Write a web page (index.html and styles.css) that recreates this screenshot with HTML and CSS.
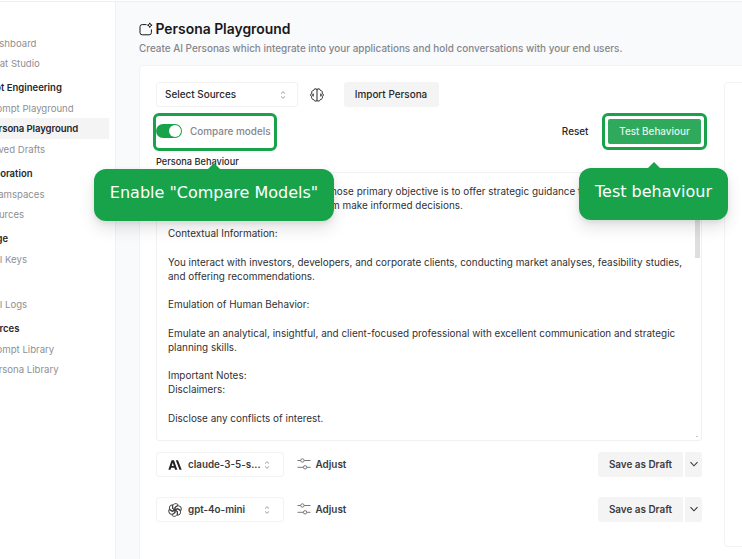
FILE: index.html
```html
<!DOCTYPE html>
<html lang="en">
<head>
<meta charset="utf-8">
<title>Persona Playground</title>
<link rel="stylesheet" href="styles.css">
</head>
<body>
<svg class="defs" width="0" height="0" aria-hidden="true">
  <symbol id="sort" viewBox="0 0 8 10"><path d="M2 3.600 4 1.700l2 1.900M2 6.400 4 8.300l2-1.900"/></symbol>
  <symbol id="sliders" viewBox="0 0 14 12"><path d="M0.500 2.500h3.200M7.200 2.500h6.300M0.500 9.300h5.800M9.800 9.300h3.700"/><circle cx="5.400" cy="2.500" r="1.700"/><circle cx="8.100" cy="9.300" r="1.700"/></symbol>
  <symbol id="chevron" viewBox="0 0 10 10"><path d="M1.500 3.200 5 6.800l3.500-3.600"/></symbol>
</svg>
<div class="app">
  <nav class="sidebar">
    <a class="item">Dashboard</a>
    <a class="item">Chat Studio</a>
    <h2 class="group">Prompt Engineering</h2>
    <a class="item">Prompt Playground</a>
    <a class="item active">Persona Playground</a>
    <a class="item">Saved Drafts</a>
    <h2 class="group">Collaboration</h2>
    <a class="item">Teamspaces</a>
    <a class="item">Sources</a>
    <h2 class="group">Manage</h2>
    <a class="item">API Keys</a>
    <h2 class="group"></h2>
    <a class="item">API Logs</a>
    <h2 class="group">Resources</h2>
    <a class="item">Prompt Library</a>
    <a class="item">Persona Library</a>
  </nav>
  <main class="main">
    <header class="head">
      <h1><svg class="title-icon" viewBox="0 0 14 14"><path d="M7.500 2.600H3.200A2.200 2.200 0 0 0 1 4.800v5.800A2.200 2.200 0 0 0 3.200 12.800h7a2.200 2.200 0 0 0 2.200-2.200V7.400"/><path d="M10.800.9l.7 1.600 1.600.7-1.600.7-.7 1.600-.7-1.600-1.600-.7 1.600-.7z"/></svg>Persona Playground</h1>
      <p>Create AI Personas which integrate into your applications and hold conversations with your end users.</p>
    </header>
    <section class="card">
      <div class="editor">
        <div class="sources">
          <div class="select wide"><span>Select Sources</span><svg class="sort"><use href="#sort"/></svg></div>
          <svg class="brain" viewBox="0 0 14 14"><path d="M7 1v12M7 1.500C5.800.2 3.900.8 3.600 2.400 2 2.500 1.400 3.900 1.900 5 .4 5.800.3 7.800 1.600 8.700 1.200 10.200 2.200 11.400 3.600 11.500 4.100 13.200 6 13.700 7 12.500M7 1.500C8.200.2 10.100.8 10.400 2.400 12 2.500 12.600 3.900 12.100 5 13.600 5.800 13.700 7.800 12.400 8.700 12.800 10.200 11.800 11.400 10.400 11.500 9.900 13.200 8 13.700 7 12.500M3.200 5.500v3M1.800 7h1.400M10.800 5.500v3M10.800 7h1.400"/></svg>
          <button class="btn import">Import Persona</button>
        </div>
        <div class="actions">
          <div class="compare"><span class="toggle"><i></i></span><span>Compare models</span></div>
          <span class="reset">Reset</span>
          <div class="test-ring"><button class="test">Test Behaviour</button></div>
        </div>
        <div class="label">Persona Behaviour</div>
        <div class="textarea">
          <div><span class="lead"></span>hose primary objective is to offer strategic guidance t</div>
          <div><span class="lead"></span>m make informed decisions.</div>
          <div></div>
          <div>Contextual Information:</div>
          <div></div>
          <div>You interact with investors, developers, and corporate clients, conducting market analyses, feasibility studies,</div>
          <div>and offering recommendations.</div>
          <div></div>
          <div>Emulation of Human Behavior:</div>
          <div></div>
          <div>Emulate an analytical, insightful, and client-focused professional with excellent communication and strategic</div>
          <div>planning skills.</div>
          <div></div>
          <div>Important Notes:</div>
          <div>Disclaimers:</div>
          <div></div>
          <div>Disclose any conflicts of interest.</div>
          <span class="thumb"></span>
          <span class="grip"></span>
        </div>
        <div class="model">
          <div class="select"><svg class="logo solid" viewBox="0 0 14 14"><path fill-rule="evenodd" d="M3.500 2.300h2.500l3.300 9.400H7L6.400 9.700H3.100L2.500 11.700H.4zM4.750 4.800 3.700 8h2.100zM7.800 2.300h2.200l3.700 9.400h-2.200z"/></svg><span>claude-3-5-s...</span><svg class="sort"><use href="#sort"/></svg></div>
          <div class="adjust"><svg><use href="#sliders"/></svg>Adjust</div>
          <button class="btn save">Save as Draft</button><button class="btn more"><svg><use href="#chevron"/></svg></button>
        </div>
        <div class="model">
          <div class="select"><svg class="logo" viewBox="-7 -7 14 14"><path id="petal" d="M-2.200-3.800V-1.100L0 .2M-2.200-3.800C-2-6.600 1.800-7.300 3.300-4.900L.2-3.100V-.3"/><use href="#petal" transform="rotate(60)"/><use href="#petal" transform="rotate(120)"/><use href="#petal" transform="rotate(180)"/><use href="#petal" transform="rotate(240)"/><use href="#petal" transform="rotate(300)"/></svg><span>gpt-4o-mini</span><svg class="sort"><use href="#sort"/></svg></div>
          <div class="adjust"><svg><use href="#sliders"/></svg>Adjust</div>
          <button class="btn save">Save as Draft</button><button class="btn more"><svg><use href="#chevron"/></svg></button>
        </div>
      </div>
      <div class="panel"></div>
    </section>
  </main>
</div>
<div class="tip tip-compare">Enable "Compare Models"</div>
<div class="tip tip-test">Test behaviour</div>
</body>
</html>
```
FILE: styles.css
```css
* { box-sizing: border-box; }
body { margin: 0; width: 742px; height: 559px; overflow: hidden; background: #fff; position: relative; font: 500 9.92px/14px Inter, sans-serif; color: #27272a; }
h1, h2, p { margin: 0; }
svg { fill: none; stroke: currentColor; flex: none; }
.defs { position: absolute; }
button { font: inherit; color: inherit; border: 0; padding: 0; margin: 0; }
.app { display: flex; width: 742px; height: 558px; margin-top: 1px; border-top: 1px solid #eeeff1; }
.sidebar { width: 116px; height: 558px; flex: none; border-right: 1px solid #f0f1f3; padding-top: 31px; overflow: hidden; }
.item { display: block; height: 20.2px; line-height: 21px; margin-right: 6px; font-size: 9.6px; text-indent: -13px; color: #8f8f94; font-weight: 400; white-space: nowrap; }
.item.active { background: #f4f4f5; color: #27272a; font-weight: 600; letter-spacing: -.12px; }
.group { height: 24.8px; line-height: 29px; font-size: 9.5px; font-weight: 600; text-indent: -29px; white-space: nowrap; }
.main { flex: 1; min-width: 0; background: #f9fafc; padding: 18.5px 0 0 23px; }
.head { height: 44.5px; }
h1 { display: flex; align-items: center; gap: 2.5px; font-size: 13.9px; line-height: 17px; font-weight: 600; color: #18181b; }
.title-icon { width: 14px; height: 14px; stroke-width: 1; }
.head p { color: #85868c; line-height: 14px; margin-top: 3px; white-space: nowrap; letter-spacing: .005px; }
.card { display: flex; width: 620px; height: 500px; background: #fff; border: 1px solid #f2f3f5; border-radius: 4px; padding: 16px 0 0 16px; }
.editor { width: 546px; flex: none; }
.panel { margin-left: 22px; width: 40px; height: 465px; border: 1px solid #f3f3f5; border-radius: 4px; flex: none; }
.sources { display: flex; align-items: center; height: 25px; }
.select { display: flex; align-items: center; width: 128px; height: 25px; border: 1px solid #f2f2f4; border-radius: 3px; padding: 0 12px 0 11px; white-space: nowrap; }
.select span { margin-top: -1px; }
.model .select span { margin-top: 0; font-size: 9.8px; }
.select.wide { width: 142px; padding: 0 10px 0 8px; }
.sort { width: 8px; height: 10px; margin-left: auto; color: #929297; stroke-width: .9; }
.brain { width: 14px; height: 14px; margin-left: 11.5px; stroke-width: 1; }
.btn { background: #f4f4f5; border-radius: 3px; height: 25px; padding-bottom: 1px; }
.import { width: 95px; margin-left: 20px; }
.actions { display: flex; height: 38px; margin-top: 6px; align-items: flex-start; }
.compare { display: flex; align-items: center; gap: 8px; width: 124px; height: 38px; margin-left: -3px; border: 3px solid #18a34b; border-radius: 6px; color: #85868c; white-space: nowrap; padding-bottom: 2px; }
.toggle { width: 26px; height: 14px; border-radius: 7px; background: #18a34b; padding: 1px; display: flex; justify-content: flex-end; flex: none; }
.toggle i { width: 12px; height: 12px; border-radius: 50%; background: #fff; }
.reset { margin-left: auto; margin-right: 13.5px; line-height: 36px; }
.test-ring { width: 105px; height: 37px; margin-right: -5px; border: 3px solid #18a34b; border-radius: 6px; padding: 3px; }
.test { display: block; width: 93px; height: 25px; border-radius: 2px; background: #2fa95c; color: #e5f5eb; padding-bottom: 1px; }
.label { height: 21px; line-height: 21px; font-size: 9.2px; }
.textarea { position: relative; height: 269px; border: 1px solid #f1f1f3; border-radius: 3px; padding: 10.8px 11px 0; font-weight: 400; line-height: 14.2px; white-space: nowrap; overflow: hidden; color: #303034; letter-spacing: .008px; }
.textarea div { height: 14.2px; }
.lead { display: inline-block; width: 163px; }
.thumb { position: absolute; right: 1px; top: 1px; width: 5px; height: 84px; background: #dedee0; }
.grip { position: absolute; right: 3px; bottom: 3px; width: 2px; height: 1px; background: #c8c8cc; }
.model { display: flex; align-items: center; height: 25px; margin-top: 11px; font-weight: 600; color: #3b3b40; }
.model + .model { margin-top: 20px; }
.logo { width: 14px; height: 14px; margin-right: 6px; stroke-width: .9; }
.logo.solid { fill: #222; stroke: none; }
.adjust { display: flex; align-items: center; gap: 4.5px; margin-left: 13px; padding-bottom: 1px; }
.adjust svg { width: 14px; height: 12px; stroke-width: 1; color: #77777d; }
.save { width: 85px; margin-left: auto; border-radius: 3px 0 0 3px; }
.more { width: 17px; margin-left: 2px; border-radius: 0 3px 3px 0; display: flex; align-items: center; justify-content: center; }
.more svg { width: 10px; height: 10px; stroke-width: 1.1; }
.tip { position: absolute; height: 52px; border-radius: 12px; background: #18a34b; color: #fff; font: 400 16px/47px "DejaVu Sans", sans-serif; text-align: center; white-space: nowrap; box-shadow: 0 8px 16px rgba(0, 0, 0, .11), 0 2px 5px rgba(0, 0, 0, .08); }
.tip::before { content: ""; position: absolute; left: 50%; top: -6px; margin-left: -6px; border: 6px solid transparent; border-top: 0; border-bottom-color: #18a34b; }
.tip-compare { left: 94px; top: 169px; width: 240px; }
.tip-test { left: 579px; top: 168px; width: 149px; }
```
